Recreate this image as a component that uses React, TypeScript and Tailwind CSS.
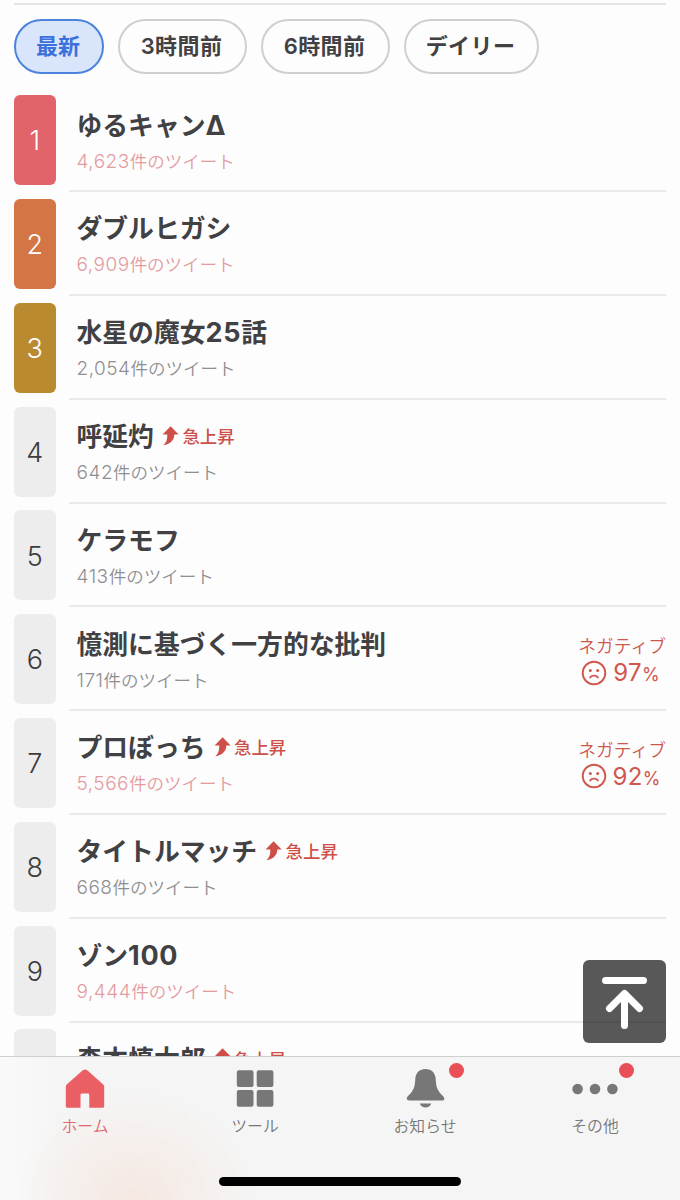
import { ReactNode } from 'react';
import clsx from 'clsx';

interface Trend {
  title: string;
  count: string;
  hot?: boolean;
  rising?: boolean;
  negative?: number;
}

const tabs = ['最新', '3時間前', '6時間前', 'デイリー'];

const trends: Trend[] = [
  { title: 'ゆるキャンΔ', count: '4,623', hot: true },
  { title: 'ダブルヒガシ', count: '6,909', hot: true },
  { title: '水星の魔女25話', count: '2,054' },
  { title: '呼延灼', count: '642', rising: true },
  { title: 'ケラモフ', count: '413' },
  { title: '憶測に基づく一方的な批判', count: '171', negative: 97 },
  { title: 'プロぼっち', count: '5,566', hot: true, rising: true, negative: 92 },
  { title: 'タイトルマッチ', count: '668', rising: true },
  { title: 'ゾン100', count: '9,444', hot: true },
  { title: '森本慎太郎', count: '', rising: true },
];

const rankColors = ['bg-[#e0646a] text-white', 'bg-[#d37544] text-white', 'bg-[#b98a30] text-white'];

const RisingIcon = () => (
  <svg className="mb-[3px]" width="17" height="20" viewBox="0 0 17 20" fill="#ce4f48">
    <path d="M8.6 0.3 L16.6 8.4 H12.3 C12.3 13.6 9 17.8 1.4 19.2 C4.6 16.2 5.4 12.8 5.3 8.4 H0.6 Z" />
  </svg>
);

const SadIcon = () => (
  <svg className="mb-[3px]" width="26" height="26" viewBox="0 0 26 26" fill="none" stroke="#d0574e" strokeWidth="1.9" strokeLinecap="round">
    <circle cx="13" cy="13" r="11.3" />
    <path d="M9.2 17.4 C10.8 15 15.2 15 16.8 17.4" />
    <circle cx="9.3" cy="10.6" r="1.5" fill="#d0574e" stroke="none" />
    <circle cx="16.7" cy="10.6" r="1.5" fill="#d0574e" stroke="none" />
  </svg>
);

// Latin digits and Δ are set a little larger than the kana around them
const Title = ({ text }: { text: string }) => (
  <h2 className="text-[25.8px] leading-9 font-semibold text-[#414143]">
    {text.split(/(\d+|Δ)/).map((part, index) =>
      /\d|Δ/.test(part) ? (
        <span key={index} className="text-[27px] leading-none font-bold tracking-[0.7px]">
          {part}
        </span>
      ) : (
        part
      ),
    )}
  </h2>
);

const TrendRow = ({ trend, rank }: { trend: Trend; rank: number }) => (
  <li className="flex h-[103.8px] shrink-0 items-start">
    <div
      className={clsx(
        'flex h-[90px] w-[41.5px] shrink-0 items-center justify-center rounded-md pt-[3px] text-[27px] font-[350]',
        rankColors[rank - 1] ?? 'bg-[#ededed] text-[#3c3c3c]',
      )}
    >
      {rank > 9 ? '' : rank}
    </div>
    <div className="ml-[13.5px] flex h-[97px] flex-1 justify-between border-b-2 border-[#e9e9e9] pl-[7.5px]">
      <div className="pt-[12.5px]">
        <div className="flex h-9 items-center">
          <Title text={trend.title} />
          {trend.rising && (
            <span className="ml-2 flex items-center gap-[3.5px] text-[17.4px] leading-9 font-medium text-[#ce4f48]">
              <RisingIcon />
              急上昇
            </span>
          )}
        </div>
        {trend.count && (
          <p className={clsx('text-[17.5px] leading-[35px] font-[350]', trend.hot ? 'text-[#e39ba0]' : 'text-[#8f8f91]')}>
            <span className="text-[19px] tracking-[0.5px]">{trend.count}</span>件のツイート
          </p>
        )}
      </div>
      {trend.negative && (
        <div className="flex flex-col items-center pt-[21px] font-[350] text-[#d0574e]">
          <span className="text-[17.8px] leading-6">ネガティブ</span>
          <span className="mr-[3px] flex items-center gap-1.5 leading-7">
            <SadIcon />
            <span className="text-[24px] font-normal tracking-[0.3px]">
              {trend.negative}
              <span className="text-[18px]">%</span>
            </span>
          </span>
        </div>
      )}
    </div>
  </li>
);

const HomeIcon = () => (
  <svg width="40" height="40" viewBox="0 0 40 40" fill="#e95f64">
    <path d="M17.8 1.2 Q20 -0.4 22.2 1.2 L38 15.2 Q39.2 16.3 39.2 17.8 V37.2 Q39.2 38.8 37.6 38.8 H24.3 V26 Q24.3 24.6 22.8 24.6 H17 Q15.5 24.6 15.5 26 V38.8 H2.4 Q0.8 38.8 0.8 37.2 V17.8 Q0.8 16.3 2 15.2 Z" />
  </svg>
);

const ToolsIcon = () => (
  <svg width="38" height="38" viewBox="0 0 38 38" fill="#777">
    <rect x="0.8" y="0.2" width="16.7" height="16.7" rx="2" />
    <rect x="20.7" y="0.2" width="16.7" height="16.7" rx="2" />
    <rect x="0.8" y="20.1" width="16.7" height="16.7" rx="2" />
    <rect x="20.7" y="20.1" width="16.7" height="16.7" rx="2" />
  </svg>
);

const BellIcon = () => (
  <svg width="40" height="40" viewBox="0 0 40 40" fill="#777">
    <path d="M20.5 0 C14.5 0 10.8 3.6 10.3 9.8 C9.8 17.8 9.2 21.3 3 27 C0.8 29.4 1.6 31.6 4.6 31.6 H36.6 C39.6 31.6 40.2 29.4 38 27 C31.8 21.3 31.2 17.8 30.7 9.8 C30.2 3.6 26.5 0 20.5 0 Z" />
    <path d="M14.7 34.4 H26.3 C24.5 39.8 16.5 39.8 14.7 34.4 Z" />
  </svg>
);

const MoreIcon = () => (
  <svg width="46" height="12" viewBox="0 0 46 12" fill="#777">
    <circle cx="5.6" cy="6" r="5.3" />
    <circle cx="23" cy="6" r="5.3" />
    <circle cx="40.4" cy="6" r="5.3" />
  </svg>
);

const NavItem = ({ icon, label, active, badge }: { icon: ReactNode; label: string; active?: boolean; badge?: boolean }) => (
  <a className={clsx('relative flex flex-1 flex-col items-center pt-3', active ? 'text-[#e0656c]' : 'text-[#777]')}>
    <span className="flex h-10 items-center">{icon}</span>
    <span className="mt-1.5 text-[15.8px] leading-6 font-[350]">{label}</span>
    {badge && <span className="absolute top-[6px] left-[109px] size-[15px] rounded-full bg-[#e94f57]" />}
  </a>
);

export default function App() {
  return (
    <div className="relative flex h-[1200px] w-[680px] flex-col overflow-hidden bg-[#fdfdfd] font-['Inter','Noto_Sans_CJK_JP',sans-serif]">
      <main className="flex min-h-0 flex-1 flex-col overflow-hidden px-3.5 pt-[3px]">
        <div className="flex shrink-0 gap-3.5 border-t-2 border-[#e4e4e4] pt-3.5">
          {tabs.map((tab, index) => (
            <button
              key={tab}
              className={clsx(
                'flex h-[55px] items-center justify-center rounded-full border-2 pr-0.5 text-[22px] font-semibold',
                index === 0 && 'w-[90px] border-[#4c83dc] bg-[#d9e5fb] text-[#3c70dc]',
                index > 0 && 'border-[#cfcfd1] text-[#414143]',
                (index === 1 || index === 2) && 'w-[129px] tracking-[0.4px]',
                index === 3 && 'w-[135px] tracking-[0.4px]',
              )}
            >
              {tab}
            </button>
          ))}
        </div>
        <ul className="mt-[21.2px] flex flex-col">
          {trends.map((trend, index) => (
            <TrendRow key={trend.title} trend={trend} rank={index + 1} />
          ))}
        </ul>
      </main>

      <button className="absolute top-[959.5px] left-[583px] flex size-[83px] items-center justify-center rounded-md bg-black/65">
        <svg width="83" height="83" viewBox="0 0 83 83" fill="none" stroke="#fff" strokeWidth="7" strokeLinecap="round" strokeLinejoin="round">
          <path d="M22.5 20.5 H60.5" />
          <path d="M41.5 65.5 V35 M26.5 48.5 L41.5 33.5 L56.5 48.5" />
        </svg>
      </button>

      <nav className="flex h-[144.5px] shrink-0 flex-col justify-between border-t border-[#cfcfcf] bg-[#f5f5f5] bg-[radial-gradient(ellipse_120px_110px_at_135px_100%,#f5e8e1,transparent),linear-gradient(to_right,#fafafa,#f5f5f5_60px)]">
        <div className="flex">
          <NavItem icon={<HomeIcon />} label="ホーム" active />
          <NavItem icon={<ToolsIcon />} label="ツール" />
          <NavItem icon={<BellIcon />} label="お知らせ" badge />
          <NavItem icon={<MoreIcon />} label="その他" badge />
        </div>
        <div className="mb-3.5 h-[9px] w-[242px] self-center rounded-full bg-black" />
      </nav>
    </div>
  );
}
